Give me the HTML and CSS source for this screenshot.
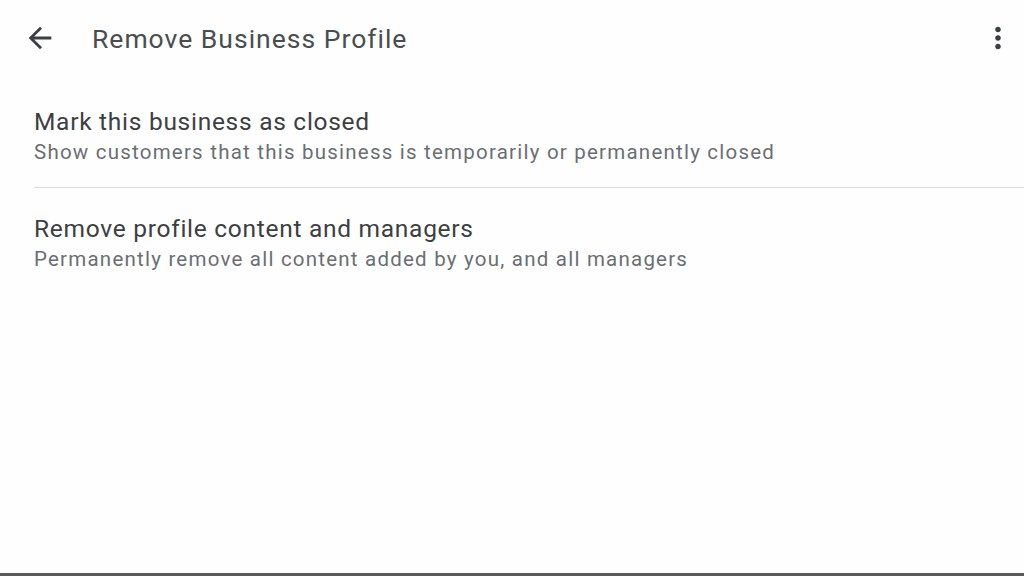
FILE: index.html
```html
<!DOCTYPE html>
<html>
<head>
<meta charset="utf-8">
<link rel="stylesheet" href="styles.css">
</head>
<body>
<div class="page">
  <header class="topbar">
    <button class="icon-btn back" aria-label="Back">
      <svg width="34" height="34" viewBox="0 0 24 24"><path d="M20 11H7.83l5.59-5.59L12 4l-8 8 8 8 1.41-1.41L7.83 13H20v-2z" fill="#3c4043"/></svg>
    </button>
    <h1 class="title">Remove Business Profile</h1>
    <button class="icon-btn more" aria-label="More">
      <svg width="34" height="34" viewBox="0 0 24 24"><path d="M12 8c1.1 0 2-.9 2-2s-.9-2-2-2-2 .9-2 2 .9 2 2 2zm0 2c-1.1 0-2 .9-2 2s.9 2 2 2 2-.9 2-2-.9-2-2-2zm0 6c-1.1 0-2 .9-2 2s.9 2 2 2 2-.9 2-2-.9-2-2-2z" fill="#3c4043"/></svg>
    </button>
  </header>
  <ul class="list">
    <li class="item">
      <div class="item-title">Mark this business as closed</div>
      <div class="item-sub">Show customers that this business is temporarily or permanently closed</div>
    </li>
    <li class="item">
      <div class="item-title">Remove profile content and managers</div>
      <div class="item-sub">Permanently remove all content added by you, and all managers</div>
    </li>
  </ul>
  <div class="spacer"></div>
  <div class="bottom-edge"></div>
</div>
</body>
</html>
```
FILE: styles.css
```css
* { box-sizing: border-box; }
html, body { margin: 0; padding: 0; background: #fefefe; }
body { font-family: Roboto, "Noto Sans", sans-serif; }
.page {
  width: 1024px;
  height: 576px;
  display: flex;
  flex-direction: column;
  overflow: hidden;
}
.topbar {
  display: flex;
  align-items: center;
  height: 76px;
  padding: 0 9px 0 23px;
}
.icon-btn {
  border: 0;
  background: none;
  padding: 0;
  width: 34px;
  height: 34px;
  display: flex;
  align-items: center;
  justify-content: center;
}
.title {
  flex: 1;
  margin: 0 0 0 35px;
  font-size: 26.5px;
  font-weight: 400;
  color: #4a4d50;
  letter-spacing: 1px;
}
.list {
  list-style: none;
  margin: 0;
  padding: 2px 0 0 34px;
}
.item {
  padding: 28px 0 21px;
  border-bottom: 1px solid #dcdcdc;
}
.item:last-child { border-bottom: 0; padding-top: 25px; }
.item-title {
  font-size: 24.5px;
  color: #3c4043;
  line-height: 32px;
  letter-spacing: 0.72px;
}
.item-sub {
  font-size: 20.5px;
  color: #6b6f73;
  line-height: 28px;
  letter-spacing: 1.22px;
}
.spacer { flex: 1; }
.bottom-edge {
  height: 3px;
  background: #5a5a5a;
}
```
